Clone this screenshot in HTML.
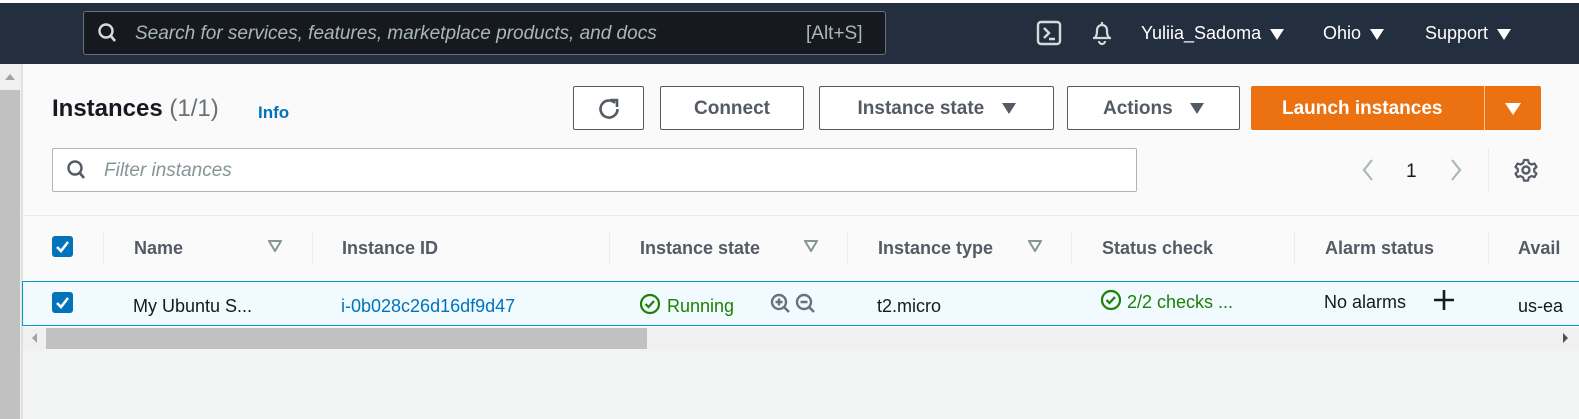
<!DOCTYPE html>
<html><head><style>
*{box-sizing:border-box;margin:0;padding:0}
body{width:1579px;height:419px;overflow:hidden;background:#fafafa;font-family:"Liberation Sans",sans-serif;position:relative}
.a{position:absolute}
.nav{left:0;top:3px;width:1579px;height:61px;background:#232f3e}
.t{position:absolute;white-space:nowrap}
.btn{position:absolute;top:86px;height:44px;border:1px solid #545b64;border-radius:2px;background:#fff;color:#545b64;font-weight:bold;font-size:19px;line-height:44px;text-align:center}
.hd{position:absolute;top:238px;font-weight:bold;font-size:18px;color:#545b64;white-space:nowrap}
.sep{position:absolute;top:233px;width:1px;height:30px;background:#eaeded}
.tri{display:inline-block;width:0;height:0;border-left:7px solid transparent;border-right:7px solid transparent;border-top:11px solid currentColor;vertical-align:middle}
.ftri{position:absolute;top:240px;width:14px;height:12px}
.cb{position:absolute;left:52px;width:21px;height:21px;background:#0073bb;border-radius:3px}
</style></head><body>
<div class="a" style="left:0;top:0;width:1579px;height:3px;background:#fff"></div>
<div class="a nav"></div>
<div class="a" style="left:83px;top:11px;width:803px;height:44px;background:#16191f;border:1px solid #687078;border-radius:3px"></div>
<svg class="a" style="left:97px;top:22px" width="22" height="22" viewBox="0 0 22 22"><circle cx="9" cy="9" r="6.5" fill="none" stroke="#d5dbdb" stroke-width="2.4"/><path d="M13.5 13.5L18 19" stroke="#d5dbdb" stroke-width="2.6"/></svg>
<div class="t" style="left:135px;top:23px;font-size:19px;font-style:italic;color:#aab7b8">Search for services, features, marketplace products, and docs</div>
<div class="t" style="left:806px;top:23px;font-size:19px;color:#aab7b8">[Alt+S]</div>
<svg class="a" style="left:1036px;top:20px" width="26" height="26" viewBox="0 0 26 26"><rect x="2" y="2" width="22" height="22" rx="3" fill="none" stroke="#d5dbdb" stroke-width="2.4"/><path d="M8 8l5 5-5 5M13 19h6" fill="none" stroke="#d5dbdb" stroke-width="2.4"/></svg>
<svg class="a" style="left:1089px;top:19px" width="26" height="28" viewBox="0 0 26 28"><path d="M13 3v2M6 19c2-3 2-5 2-8a5 5 0 0110 0c0 3 0 5 2 8zM4 19h18M10 22a3 3 0 006 0" fill="none" stroke="#d5dbdb" stroke-width="2.2"/></svg>
<div class="t" style="left:1141px;top:23px;font-size:18px;color:#fff">Yuliia_Sadoma <span class="tri" style="color:#fff;margin-left:4px"></span></div>
<div class="t" style="left:1323px;top:23px;font-size:18px;color:#fff">Ohio <span class="tri" style="color:#fff;margin-left:4px"></span></div>
<div class="t" style="left:1425px;top:23px;font-size:18px;color:#fff">Support <span class="tri" style="color:#fff;margin-left:4px"></span></div>

<div class="a" style="left:0;top:64px;width:22px;height:355px;background:#f0f0f0"></div>
<div class="a" style="left:0;top:90px;width:20px;height:329px;background:#c1c1c1"></div>
<div class="a" style="left:5px;top:74px;width:0;height:0;border-left:5px solid transparent;border-right:5px solid transparent;border-bottom:6px solid #a3a3a3"></div>
<div class="a" style="left:21px;top:64px;width:2px;height:355px;background:#e0e0e0"></div>

<div class="t" style="left:52px;top:95px;font-size:24px;font-weight:bold;color:#16191f">Instances <span style="font-weight:normal;color:#687078">(1/1)</span></div>
<div class="t" style="left:258px;top:103px;font-size:17px;font-weight:bold;color:#0073bb">Info</div>

<div class="btn" style="left:573px;width:71px"><svg style="margin-top:9px" width="26" height="26" viewBox="0 0 26 26"><path d="M19 7a8.5 8.5 0 1 0 2.5 6" fill="none" stroke="#545b64" stroke-width="2.6"/><path d="M14 4h7v7" fill="none" stroke="#545b64" stroke-width="2.6"/></svg></div>
<div class="btn" style="left:660px;width:144px">Connect</div>
<div class="btn" style="left:819px;width:235px">Instance state <span class="tri" style="margin-left:12px"></span></div>
<div class="btn" style="left:1067px;width:173px">Actions <span class="tri" style="margin-left:12px"></span></div>
<div class="a" style="left:1251px;top:86px;width:290px;height:44px;background:#ec7211;border-radius:2px"></div>
<div class="a" style="left:1484px;top:86px;width:1px;height:44px;background:#f7c49a"></div>
<div class="t" style="left:1282px;top:98px;font-size:19px;font-weight:bold;color:#fff">Launch instances</div>
<div class="a" style="left:1505px;top:103px;width:0;height:0;border-left:8px solid transparent;border-right:8px solid transparent;border-top:12px solid #fff"></div>

<div class="a" style="left:52px;top:148px;width:1085px;height:44px;background:#fff;border:1px solid #aab7b8;border-radius:2px"></div>
<svg class="a" style="left:66px;top:159px" width="22" height="22" viewBox="0 0 22 22"><circle cx="9" cy="9" r="6.5" fill="none" stroke="#545b64" stroke-width="2.4"/><path d="M13.5 13.5L18 19" stroke="#545b64" stroke-width="2.6"/></svg>
<div class="t" style="left:104px;top:160px;font-size:19px;font-style:italic;color:#879596">Filter instances</div>
<svg class="a" style="left:1360px;top:157px" width="16" height="26" viewBox="0 0 16 26"><path d="M12 3L4 13l8 10" fill="none" stroke="#aab7b8" stroke-width="2.2"/></svg>
<div class="t" style="left:1406px;top:161px;font-size:19px;color:#16191f">1</div>
<svg class="a" style="left:1448px;top:157px" width="16" height="26" viewBox="0 0 16 26"><path d="M4 3l8 10-8 10" fill="none" stroke="#aab7b8" stroke-width="2.2"/></svg>
<div class="a" style="left:1488px;top:148px;width:1px;height:44px;background:#eaeded"></div>
<svg class="a" style="left:1513px;top:157px" width="26" height="26" viewBox="0 0 26 26"><circle cx="13" cy="13" r="3.5" fill="none" stroke="#545b64" stroke-width="2.4"/><path d="M11 3h4l.8 3 2.7 1.5 3-1 2 3.5-2.3 2v2.6l2.3 2-2 3.5-3-1-2.7 1.5-.8 3h-4l-.8-3-2.7-1.5-3 1-2-3.5 2.3-2v-2.6l-2.3-2 2-3.5 3 1L10.2 6z" fill="none" stroke="#545b64" stroke-width="2.2" stroke-linejoin="round"/></svg>

<div class="a" style="left:23px;top:215px;width:1556px;height:1px;background:#eaeded"></div>
<div class="cb" style="top:236px"><svg width="21" height="21" viewBox="0 0 21 21"><path d="M5 11l4 4 7-9" fill="none" stroke="#fff" stroke-width="2.6"/></svg></div>
<div class="sep" style="left:103px"></div>
<div class="hd" style="left:134px">Name</div>
<svg class="ftri" style="left:268px"><path d="M1 1h12L7 11z" fill="none" stroke="#879596" stroke-width="2"/></svg>
<div class="sep" style="left:312px"></div>
<div class="hd" style="left:342px">Instance ID</div>
<div class="sep" style="left:609px"></div>
<div class="hd" style="left:640px">Instance state</div>
<svg class="ftri" style="left:804px"><path d="M1 1h12L7 11z" fill="none" stroke="#879596" stroke-width="2"/></svg>
<div class="sep" style="left:847px"></div>
<div class="hd" style="left:878px">Instance type</div>
<svg class="ftri" style="left:1028px"><path d="M1 1h12L7 11z" fill="none" stroke="#879596" stroke-width="2"/></svg>
<div class="sep" style="left:1071px"></div>
<div class="hd" style="left:1102px">Status check</div>
<div class="sep" style="left:1294px"></div>
<div class="hd" style="left:1325px">Alarm status</div>
<div class="sep" style="left:1488px"></div>
<div class="hd" style="left:1518px">Avail</div>

<div class="a" style="left:22px;top:281px;width:1557px;height:45px;background:#f1faff;border-top:1px solid #00a1c9;border-bottom:1px solid #00a1c9;border-left:1px solid #00a1c9"></div>
<div class="cb" style="top:292px"><svg width="21" height="21" viewBox="0 0 21 21"><path d="M5 11l4 4 7-9" fill="none" stroke="#fff" stroke-width="2.6"/></svg></div>
<div class="t" style="left:133px;top:296px;font-size:18px;color:#16191f">My Ubuntu S...</div>
<div class="t" style="left:341px;top:296px;font-size:18px;color:#0073bb">i-0b028c26d16df9d47</div>
<svg class="a" style="left:639px;top:293px" width="22" height="22" viewBox="0 0 22 22"><circle cx="11" cy="11" r="9" fill="none" stroke="#1d8102" stroke-width="2.2"/><path d="M6.5 11l3 3 5.5-6" fill="none" stroke="#1d8102" stroke-width="2.2"/></svg>
<div class="t" style="left:667px;top:296px;font-size:18px;color:#1d8102">Running</div>
<svg class="a" style="left:770px;top:293px" width="48" height="22" viewBox="0 0 48 22"><circle cx="9" cy="9" r="7" fill="none" stroke="#687078" stroke-width="2.4"/><path d="M14 14l5 5M5.5 9h7M9 5.5v7" stroke="#687078" stroke-width="2.4"/><circle cx="34" cy="9" r="7" fill="none" stroke="#687078" stroke-width="2.4"/><path d="M39 14l5 5M30.5 9h7" stroke="#687078" stroke-width="2.4"/></svg>
<div class="t" style="left:877px;top:296px;font-size:18px;color:#16191f">t2.micro</div>
<svg class="a" style="left:1100px;top:289px" width="22" height="22" viewBox="0 0 22 22"><circle cx="11" cy="11" r="9" fill="none" stroke="#1d8102" stroke-width="2.2"/><path d="M6.5 11l3 3 5.5-6" fill="none" stroke="#1d8102" stroke-width="2.2"/></svg>
<div class="t" style="left:1127px;top:292px;font-size:18px;color:#1d8102">2/2 checks ...</div>
<div class="t" style="left:1324px;top:292px;font-size:18px;color:#16191f">No alarms</div>
<svg class="a" style="left:1433px;top:289px" width="22" height="22" viewBox="0 0 22 22"><path d="M11 1v20M1 11h20" stroke="#16191f" stroke-width="2.6"/></svg>
<div class="t" style="left:1518px;top:296px;font-size:18px;color:#16191f">us-ea</div>

<div class="a" style="left:23px;top:327px;width:1556px;height:22px;background:#f0f0f0"></div>
<div class="a" style="left:46px;top:328px;width:601px;height:21px;background:#c1c1c1"></div>
<div class="a" style="left:32px;top:333px;width:0;height:0;border-top:5px solid transparent;border-bottom:5px solid transparent;border-right:5px solid #a3a3a3"></div>
<div class="a" style="left:1563px;top:333px;width:0;height:0;border-top:5px solid transparent;border-bottom:5px solid transparent;border-left:5px solid #505050"></div>
<div class="a" style="left:23px;top:349px;width:1556px;height:70px;background:#f2f3f3"></div>
</body></html>
